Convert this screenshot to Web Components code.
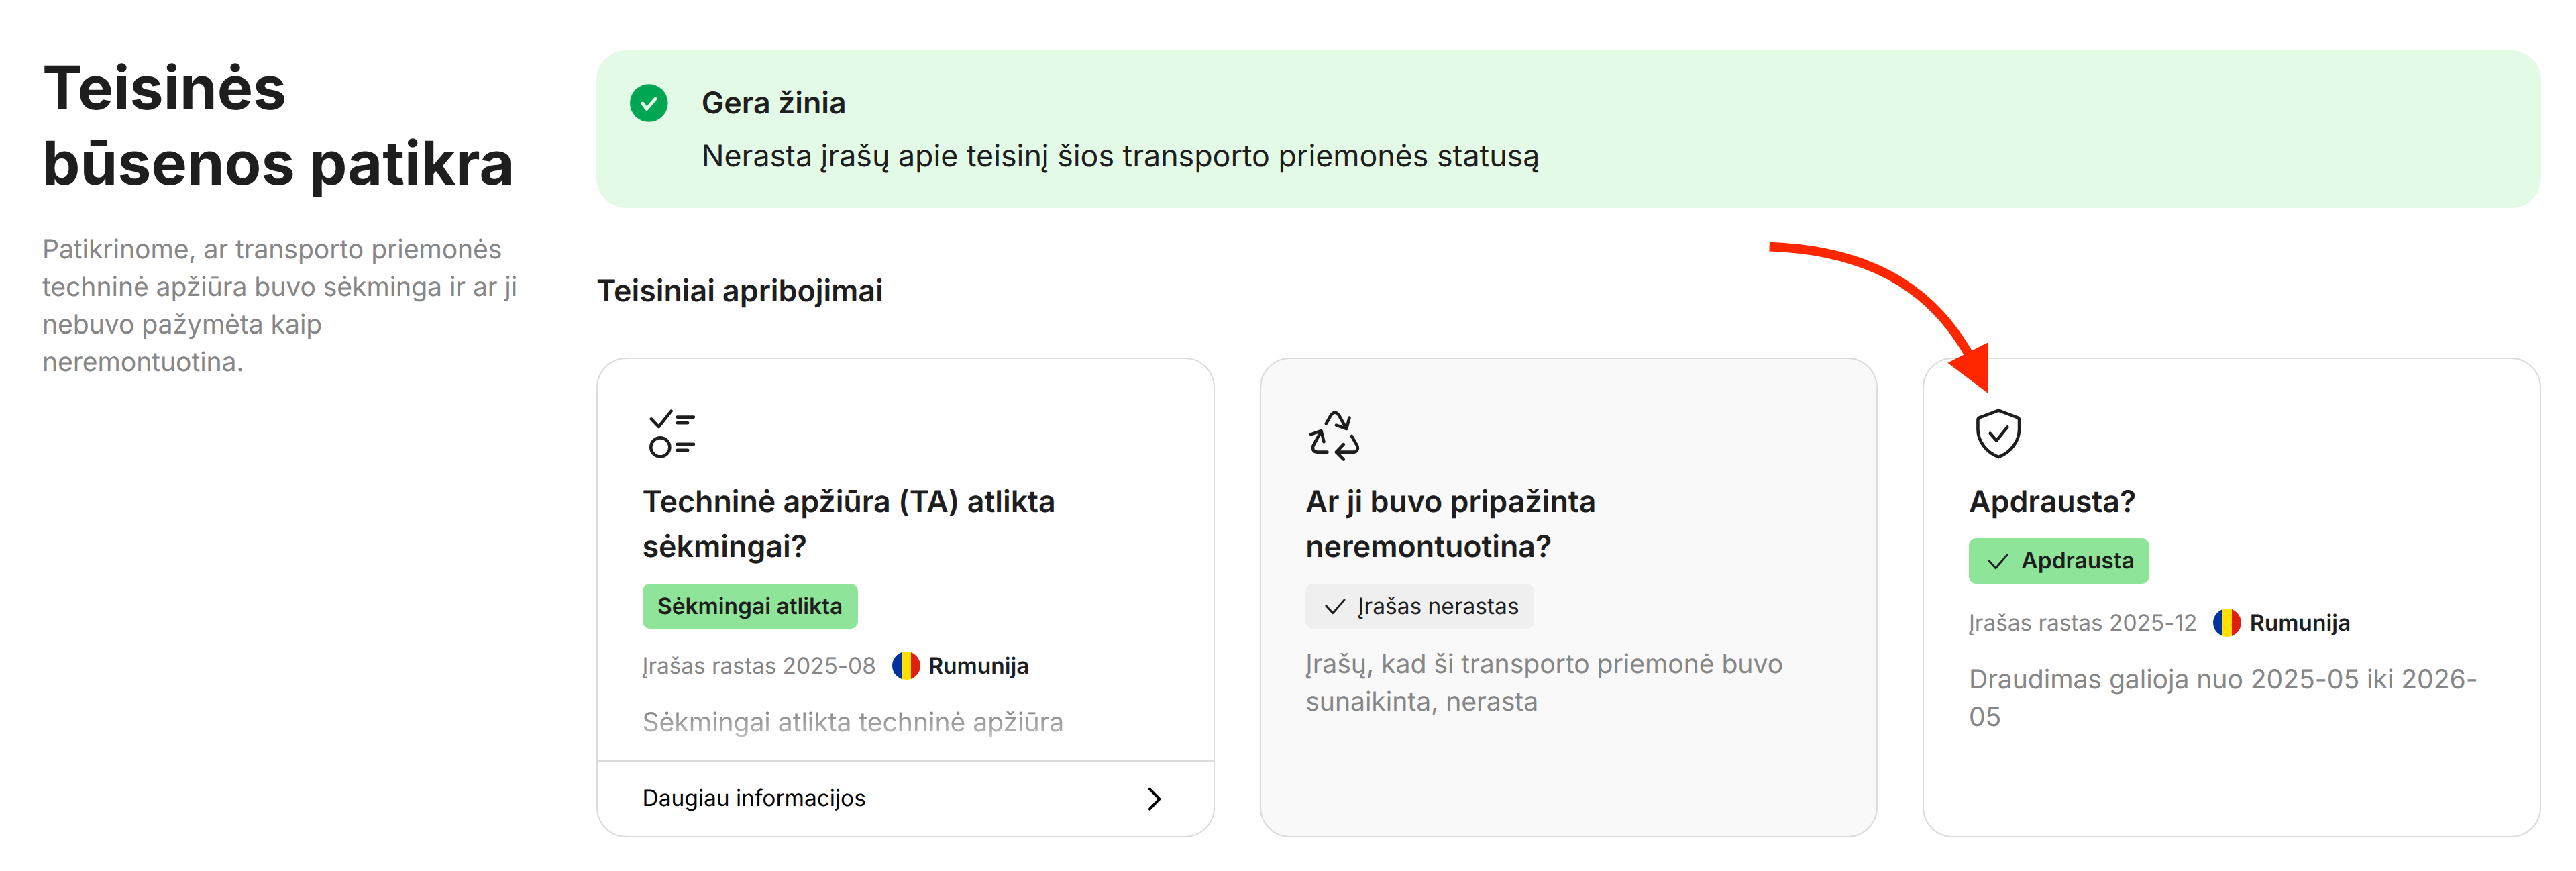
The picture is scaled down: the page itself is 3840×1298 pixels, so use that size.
<!DOCTYPE html>
<html lang="lt">
<head>
<meta charset="utf-8">
<title>Teisinės būsenos patikra</title>
<style>
  html {
    font-size: 44.8px;
  }
  body {
    margin: 0;
    background: #fff;
    color: #1e1e1e;
    font-family: Inter, sans-serif;
    letter-spacing: -0.04px;
    text-rendering: geometricPrecision;
  }
</style>
</head>
<body>
<legal-page>
  <section-intro slot="intro" heading="Teisinės būsenos patikra">Patikrinome, ar transporto priemonės techninė apžiūra buvo sėkminga ir ar ji nebuvo pažymėta kaip neremontuotina.</section-intro>

  <alert-banner heading="Gera žinia">Nerasta įrašų apie teisinį šios transporto priemonės statusą</alert-banner>

  <card-group heading="Teisiniai apribojimai">
    <info-card fade>
      <line-icon slot="icon" name="checklist"></line-icon>
      <span slot="heading">Techninė apžiūra (TA) atlikta sėkmingai?</span>
      <status-badge slot="badge" kind="good">Sėkmingai atlikta</status-badge>
      <record-meta slot="meta" country="Rumunija" compact>Įrašas rastas 2025-08</record-meta>
      Sėkmingai atlikta techninė apžiūra
      <more-link slot="footer">Daugiau informacijos</more-link>
    </info-card>
    <info-card muted>
      <line-icon slot="icon" name="recycle"></line-icon>
      <span slot="heading">Ar ji buvo pripažinta neremontuotina?</span>
      <status-badge slot="badge" check>Įrašas nerastas</status-badge>
      Įrašų, kad ši transporto priemonė buvo sunaikinta, nerasta
    </info-card>
    <info-card>
      <line-icon slot="icon" name="shield"></line-icon>
      <span slot="heading">Apdrausta?</span>
      <status-badge slot="badge" kind="good" check>Apdrausta</status-badge>
      <record-meta slot="meta" country="Rumunija">Įrašas rastas 2025-12</record-meta>
      Draudimas galioja nuo 2025-05 iki 2026-05
    </info-card>
  </card-group>

  <pointer-arrow slot="overlay"></pointer-arrow>
</legal-page>

<script>
function define(name, html, setup) {
  const template = document.createElement('template');
  template.innerHTML = html;

  window.customElements.define(name, class extends HTMLElement {
    constructor() {
      super();
      this.attachShadow({ mode: 'open' });
      this.shadowRoot.appendChild(template.content.cloneNode(true));
    }

    connectedCallback() {
      if (setup) setup(this, this.shadowRoot);
    }
  });
}

function setHeading(el, root) {
  root.querySelector('.heading').textContent = el.getAttribute('heading');
}

define('legal-page', `
  <style>
    :host {
      display: grid;
      grid-template-columns: 718px 1fr;
      column-gap: 108px;
      position: relative;
      box-sizing: border-box;
      height: 1298px;
      padding: 75px 52px 50px 63px;
    }
    .main {
      display: flex;
      flex-direction: column;
      gap: 2rem;
    }
  </style>
  <slot name="intro"></slot>
  <div class="main"><slot></slot></div>
  <slot name="overlay"></slot>
`);

define('section-intro', `
  <style>
    :host {
      display: block;
    }
    .heading {
      margin: 0 0 1rem;
      font-size: 2rem;
      line-height: 2.5rem;
      font-weight: 700;
      letter-spacing: 0;
    }
    p {
      margin: 0;
      color: #868686;
      font-size: 0.875rem;
      line-height: 1.25rem;
      letter-spacing: -0.1px;
    }
  </style>
  <h1 class="heading"></h1>
  <p><slot></slot></p>
`, setHeading);

define('alert-banner', `
  <style>
    :host {
      display: flex;
      gap: 1rem;
      padding: 1rem;
      border-radius: 1rem;
      background: #e3fbe6;
      line-height: 1.5rem;
    }
    svg {
      width: 1.5rem;
      height: 1.5rem;
      flex: none;
    }
    .text {
      display: flex;
      flex-direction: column;
      gap: 0.25rem;
      margin: 0.7px 0 -0.7px;
    }
    .heading {
      font-weight: 600;
    }
  </style>
  <svg viewBox="0 0 24 24">
    <circle cx="11.9" cy="12" r="10.1" fill="#00a651"/>
    <path d="M8.6 12.2l2.1 2.9 4.7-5.4" fill="none" stroke="#e3fbe6" stroke-width="1.8" stroke-linecap="round" stroke-linejoin="round"/>
  </svg>
  <div class="text">
    <div class="heading"></div>
    <div><slot></slot></div>
  </div>
`, setHeading);

define('card-group', `
  <style>
    :host {
      display: flex;
      flex-direction: column;
      flex: 1;
      gap: 66px;
    }
    .heading {
      margin: 0;
      font-size: 1rem;
      line-height: 1.5rem;
      font-weight: 600;
    }
    .cards {
      display: grid;
      grid-template-columns: repeat(3, 1fr);
      gap: 1.5rem;
      flex: 1;
    }
  </style>
  <h2 class="heading"></h2>
  <div class="cards"><slot></slot></div>
`, setHeading);

define('info-card', `
  <style>
    :host {
      display: flex;
      flex-direction: column;
      box-sizing: border-box;
      border: 2px solid #dcdcdc;
      border-radius: 1rem;
      background: #fff;
      overflow: hidden;
    }
    :host([muted]) {
      background: #f9f9f9;
    }
    .body {
      display: flex;
      flex-direction: column;
      align-items: flex-start;
      gap: 0.5rem;
      flex: 1;
      padding: 1.5rem 66.5px 0;
    }
    h3 {
      margin: -0.3px 0 -1px;
      font-size: 1rem;
      line-height: 1.5rem;
      font-weight: 600;
    }
    .description {
      margin-top: 2.8px;
      color: #868686;
      font-size: 0.875rem;
      line-height: 1.25rem;
      letter-spacing: -0.08px;
    }
    :host([fade]) .description {
      -webkit-mask-image: linear-gradient(#000 20%, rgba(0, 0, 0, 0.45));
      mask-image: linear-gradient(#000 20%, rgba(0, 0, 0, 0.45));
    }
  </style>
  <div class="body">
    <slot name="icon"></slot>
    <h3><slot name="heading"></slot></h3>
    <slot name="badge"></slot>
    <slot name="meta"></slot>
    <div class="description"><slot></slot></div>
  </div>
  <slot name="footer"></slot>
`);

define('status-badge', `
  <style>
    :host {
      display: inline-flex;
      align-items: center;
      gap: 0.25rem;
      height: 1.5rem;
      padding: 0 0.5rem;
      border-radius: 0.25rem;
      background: #efefef;
      font-size: 0.75rem;
      line-height: 1.5rem;
    }
    :host([kind="good"]) {
      background: #8ee59a;
      font-weight: 600;
    }
    svg {
      display: none;
      width: 1rem;
      height: 1rem;
    }
    :host([check]) svg {
      display: block;
    }
  </style>
  <svg viewBox="0 0 16 16" fill="none" stroke="#1e1e1e" stroke-width="1.05" stroke-linecap="round" stroke-linejoin="round">
    <path d="M2.8 7.8l3.6 3.9 6.1-7.1"/>
  </svg>
  <slot></slot>
`);

define('record-meta', `
  <style>
    :host {
      display: flex;
      align-items: center;
      gap: 0.5rem;
      margin: 2.5px 0 -2px;
      font-size: 0.75rem;
      line-height: 1.5rem;
    }
    :host([compact]) {
      margin-top: -0.6px;
    }
    .date {
      color: #868686;
      letter-spacing: -0.11px;
    }
    .place {
      display: flex;
      align-items: center;
      gap: 0.25rem;
      font-weight: 600;
    }
    .flag {
      box-sizing: border-box;
      width: 42px;
      height: 42px;
      margin: 0 1.4px;
      border-radius: 50%;
      background: linear-gradient(90deg, #0032a0 33%, #ffde00 33% 67%, #df2011 67%);
    }
  </style>
  <span class="date"><slot></slot></span>
  <span class="place"><span class="flag"></span><span class="country"></span></span>
`, (el, root) => {
  root.querySelector('.country').textContent = el.getAttribute('country');
});

define('more-link', `
  <style>
    :host {
      display: flex;
      align-items: center;
      justify-content: space-between;
      box-sizing: border-box;
      height: 113.5px;
      padding: 0 66.5px;
      border-top: 2px solid #dcdcdc;
      color: #000;
      font-size: 0.75rem;
      line-height: 1rem;
    }
    svg {
      width: 1rem;
      height: 1rem;
    }
  </style>
  <span><slot></slot></span>
  <svg viewBox="0 0 16 16" fill="none" stroke="#000" stroke-width="1.4" stroke-linecap="round" stroke-linejoin="round">
    <path d="M6 2.8l5.2 5.3L6 13.4"/>
  </svg>
`);

const icons = {
  checklist: `
    <path d="M4.6 8l3.95 4.15L15.2 3.8M18.5 7h8.6M18.5 10.1H24M18.5 21.4h8.6M18.5 24.6H24"/>
    <circle cx="9.4" cy="23" r="5"/>`,
  recycle: `
    <path d="M11 10.5L13.5 6.1Q15.65 3 17.9 6.1L21.85 13.2M16.4 11.3l5.45 1.9 1.55-5.8"/>
    <path d="M11.6 25.6H6.2C4 25.4 3.5 23.6 4.2 22.1L8.4 14.3M2.9 16.2l5.5-1.9 1.4 5.8"/>
    <path d="M24.6 17.1L27.5 22.1C28.3 23.8 27.4 25.6 25.5 25.6H16.4M20.3 21.5l-3.9 4.1 3.9 3.9"/>`,
  shield: `
    <path d="M15.8 3.45L26 7.3Q26.8 7.7 26.8 8.6V13.6C26.8 19.5 22.6 25.8 15.8 28.2C9 25.8 4.8 19.5 4.8 13.6V8.6Q4.8 7.7 5.6 7.3Z"/>
    <path d="M11.3 15.6l3.35 3.9 5.85-7.2"/>`
};

define('line-icon', `
  <style>
    :host {
      display: block;
      width: 2rem;
      height: 2rem;
    }
    svg {
      display: block;
      width: 100%;
      height: 100%;
    }
  </style>
  <svg viewBox="0 0 32 32" fill="none" stroke="#1e1e1e" stroke-width="1.65" stroke-linecap="round" stroke-linejoin="round"></svg>
`, (el, root) => {
  root.querySelector('svg').innerHTML = icons[el.getAttribute('name')];
});

// hand drawn pointer, floats over the cards
define('pointer-arrow', `
  <style>
    :host {
      position: absolute;
      left: 2620px;
      top: 350px;
      width: 380px;
      height: 250px;
    }
    svg {
      display: block;
      width: 100%;
      height: 100%;
    }
  </style>
  <svg viewBox="0 0 1140 750">
    <path d="M53 53C470 68 765 215 948 540" fill="none" stroke="#ff2600" stroke-width="41"/>
    <path d="M850 572l181-91v228z" fill="#ff2600"/>
  </svg>
`);
</script>
</body>
</html>
